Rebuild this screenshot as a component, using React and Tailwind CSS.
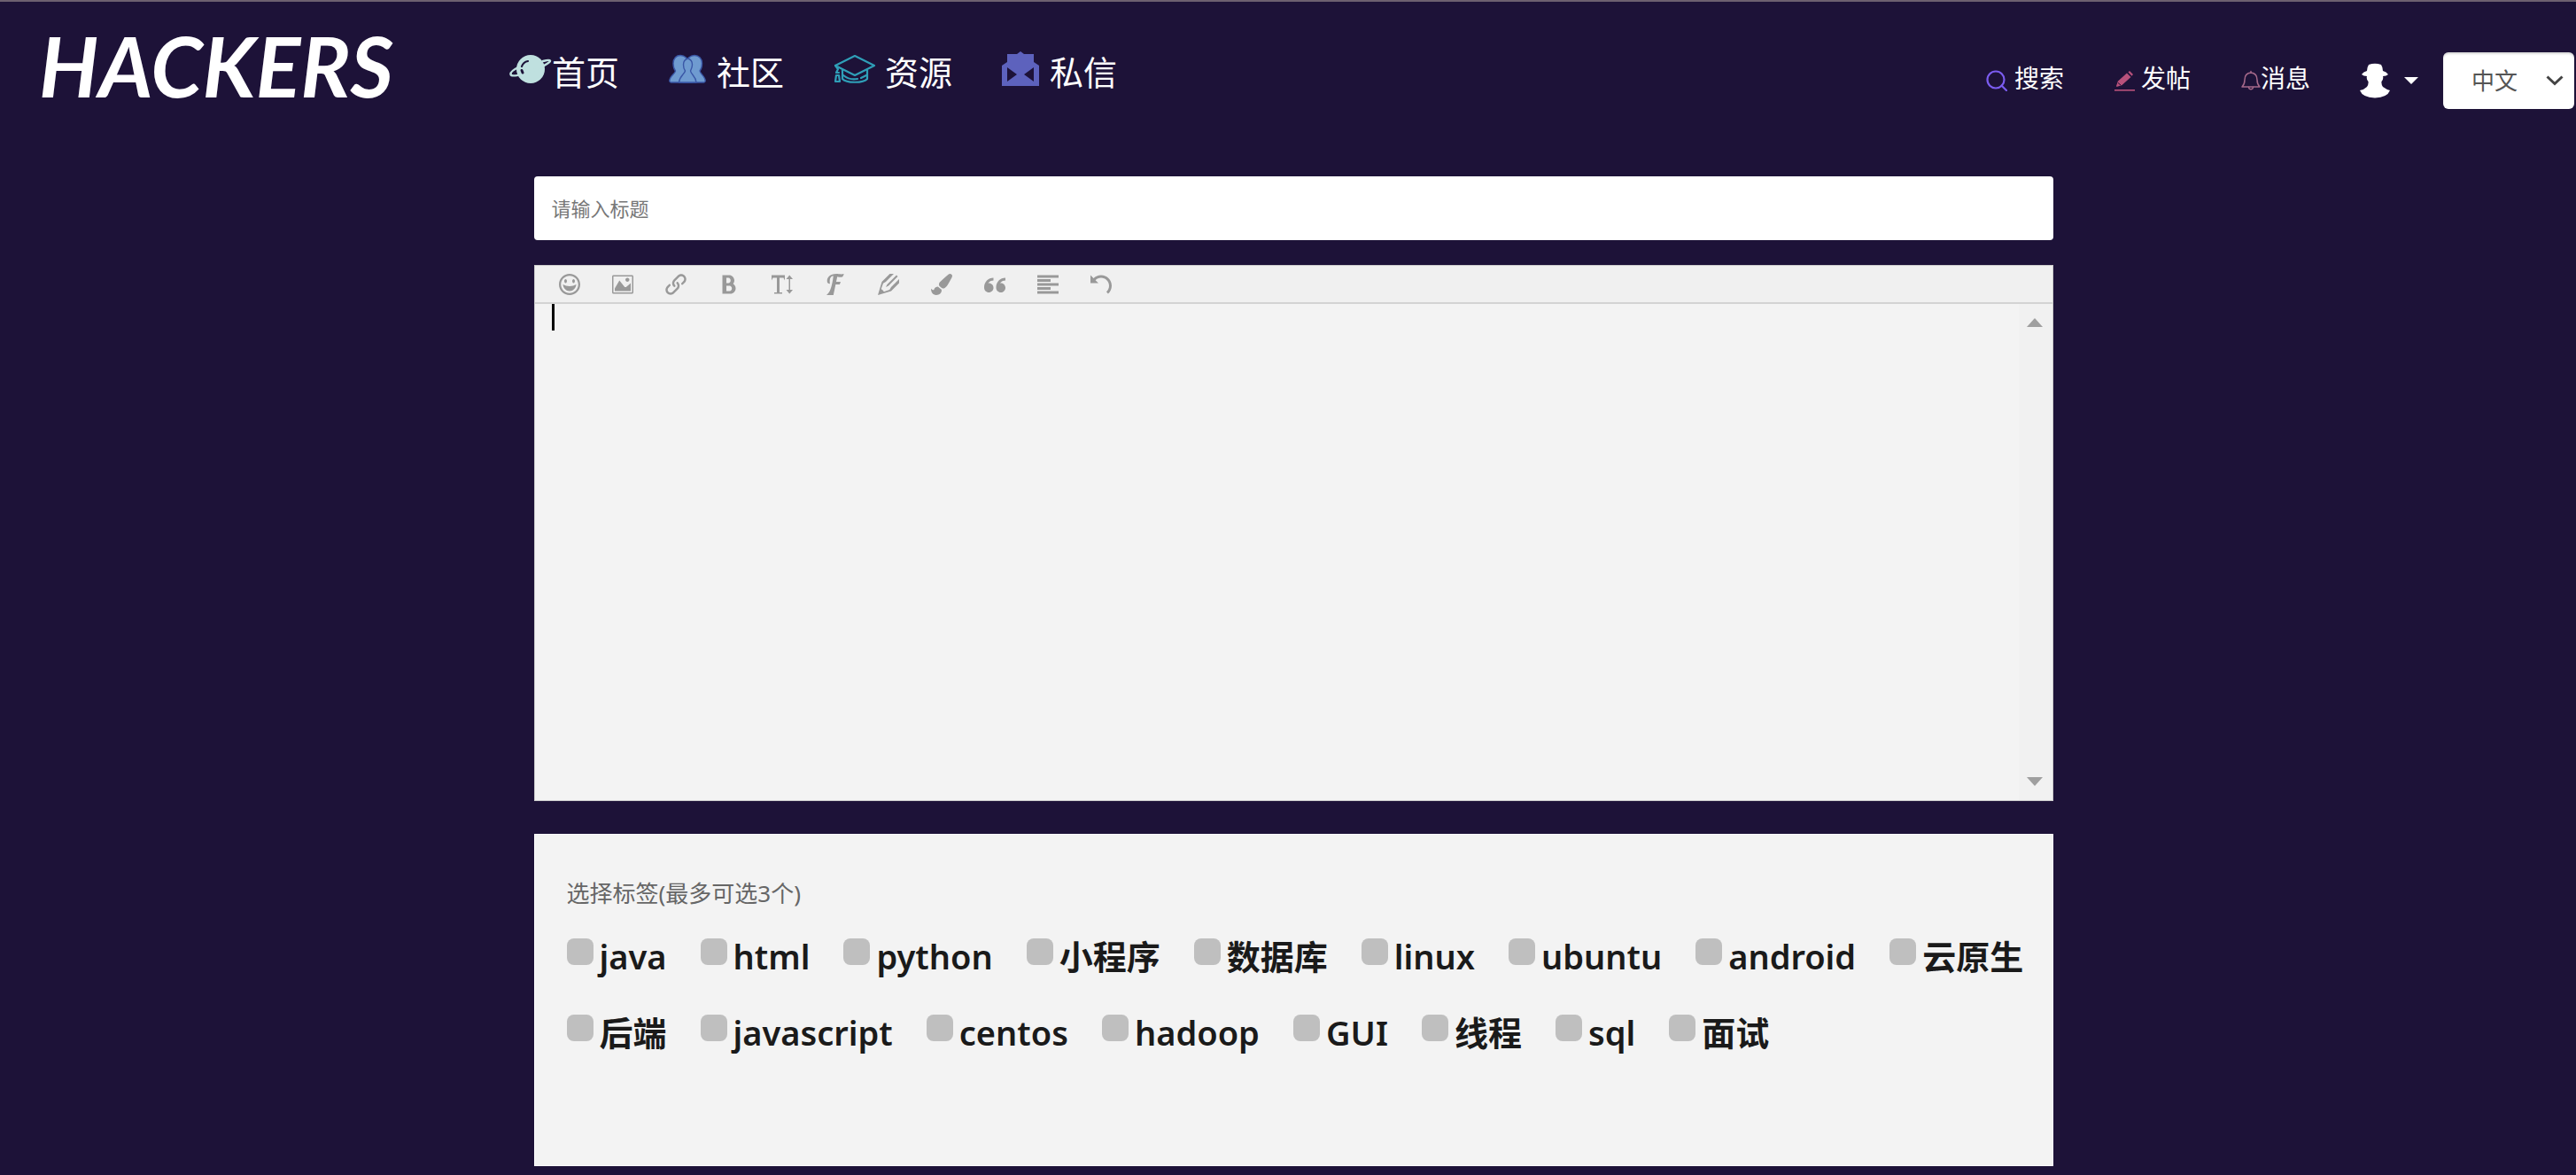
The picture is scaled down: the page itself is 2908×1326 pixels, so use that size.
import React, { useState } from "react";
import {
  ImHappy,
  ImImage,
  ImLink,
  ImBold,
  ImTextHeight,
  ImFont,
  ImPencil2,
  ImQuotesLeft,
  ImParagraphLeft,
  ImUndo,
} from "react-icons/im";
import { FaPaintBrush } from "react-icons/fa";

function PlanetIcon() {
  return (
    <svg viewBox="0 0 48 34" className="h-[34px] w-12" aria-hidden="true">
      <circle cx="24" cy="17" r="16" fill="#bfe0df" />
      <path
        d="M10 15C4 18 1 21 1.500 23C2.500 26 12 24 24 19.500C37 14.500 47 9.500 46 7.500C45.500 6.500 42 7 38 8"
        fill="none"
        stroke="#bfe0df"
        strokeWidth="2.400"
        strokeLinecap="round"
      />
      <path d="M14 14C15 11 18 8.500 21 8" fill="none" stroke="#1d1238" strokeWidth="2.200" strokeLinecap="round" />
      <path d="M14 18.500L15 21" fill="none" stroke="#1d1238" strokeWidth="3" strokeLinecap="round" />
    </svg>
  );
}

function PeopleIcon() {
  return (
    <svg viewBox="0 0 42 34" className="h-[34px] w-[42px]" aria-hidden="true">
      <g fill="#6f9bd0" stroke="#3a57a6" strokeWidth="1.400" strokeLinejoin="round">
        <path d="M13 1.500C18 1.500 22 5 22 10.500C22 14 21 16.500 19.500 18.500C19.500 23 25 24 26.500 32H2.500C.5 32 .5 29.500 1.500 27.500C3 24 7 22 7.500 19C5.500 16.500 5 13.500 5 10.500C5 5 8.500 1.500 13 1.500Z" />
        <path d="M29 1.500C34 1.500 37.500 5 37.500 10.500C37.500 13.500 37 16.500 35 19C35.500 22 39 24 40.500 27.500C41.500 29.500 41.500 32 39.500 32H16C17 24 22.500 23 22.500 18.500C21 16.500 20 14 20 10.500C20 5 24 1.500 29 1.500Z" />
        <path d="M21.500 5C25 6 26.500 9 26.500 12C26.500 15 25.500 17 24.500 19C25 23 30.500 25 31 32H11.500C12 25 17.500 23 18.500 19C17 17 16.500 15 16.500 12C16.500 9 18 6 21.500 5Z" />
      </g>
    </svg>
  );
}

function CapIcon() {
  return (
    <svg
      viewBox="0 0 48 34"
      className="h-[34px] w-12"
      fill="none"
      stroke="#2f9fb8"
      strokeWidth="2.200"
      strokeLinejoin="round"
      strokeLinecap="round"
      aria-hidden="true"
    >
      <path d="M24 2L46 13L24 24L2 13Z" />
      <path d="M10 18V28C14 33 34 33 38 28V18" />
      <path d="M11 24C16 28 22 29 27 28M31 27L37 24" />
      <path d="M2 13L5 17L3 21H6M3 24L2 31H7L6 24Z" />
    </svg>
  );
}

function MailIcon() {
  return (
    <svg viewBox="0 0 42 40" className="h-10 w-[42px]" aria-hidden="true">
      <path
        d="M17 3L21 0L25 3H36V12L42 16V39H0V16L6 12V3ZM6 18V34L17 26ZM36 18L25 26L36 34Z"
        fill="#5d62bd"
        fillRule="evenodd"
      />
    </svg>
  );
}

function SearchIcon() {
  return (
    <svg viewBox="0 0 24 24" className="size-6" fill="none" stroke="#7b5cf0" strokeWidth="2.200" strokeLinecap="round" aria-hidden="true">
      <circle cx="11" cy="11" r="9.500" />
      <path d="M17.500 17.500L23 23" />
    </svg>
  );
}

function PenIcon() {
  return (
    <svg viewBox="0 0 24 24" className="size-6" fill="#b8517b" aria-hidden="true">
      <path d="M2 18L4 12.500L14 3.500L18.500 8L8.500 17L2.500 19Z" />
      <path d="M15.500 2.500L17 1L21 5L19.500 6.800Z" />
      <path d="M4 14.500L7 17" stroke="#1d1238" strokeWidth="1" />
      <rect x="0" y="22" width="23" height="1.600" />
    </svg>
  );
}

function BellIcon() {
  return (
    <svg viewBox="0 0 22 24" className="h-6 w-[22px]" fill="none" stroke="#a5688a" strokeWidth="1.500" strokeLinecap="round" strokeLinejoin="round" aria-hidden="true">
      <path d="M11 1.500V3M11 3C6 3.500 4 7 4 11C4 15 3 17 1 19H21C19 17 18 15 18 11C18 7 16 3.500 11 3Z" />
      <path d="M8.500 19.500C9 22.500 13 22.500 13.500 19.500" />
    </svg>
  );
}

function ProfileIcon() {
  return (
    <svg viewBox="0 0 34 40" className="h-10 w-[34px]" fill="#ffffff" aria-hidden="true">
      <path d="M10 2Q17-.5 24 2Q26 5 26 9Q30 10 32 13Q30 15 26 15Q27 18 24.500 21Q24 24 26 27Q30 30 34 31Q31 39 17 39.500Q3 39 0 31Q5 30 8 27Q10 24 9.500 21Q7 18 8 15Q4 15 2 13Q4 10 8 9Q8 5 10 2Z" />
    </svg>
  );
}

const navLinks = [
  { label: "首页", Icon: PlanetIcon, gap: "gap-0" },
  { label: "社区", Icon: PeopleIcon, gap: "gap-3" },
  { label: "资源", Icon: CapIcon, gap: "gap-2.5" },
  { label: "私信", Icon: MailIcon, gap: "gap-3" },
];

const actions = [
  { label: "搜索", Icon: SearchIcon, gap: "gap-2" },
  { label: "发帖", Icon: PenIcon, gap: "gap-1.5" },
  { label: "消息", Icon: BellIcon, gap: "gap-0" },
];

const tools = [
  { label: "表情", Icon: ImHappy },
  { label: "图片", Icon: ImImage },
  { label: "链接", Icon: ImLink },
  { label: "粗体", Icon: ImBold },
  { label: "字号", Icon: ImTextHeight },
  { label: "字体", Icon: ImFont },
  { label: "文字颜色", Icon: ImPencil2 },
  { label: "背景颜色", Icon: FaPaintBrush },
  { label: "引用", Icon: ImQuotesLeft },
  { label: "对齐", Icon: ImParagraphLeft },
  { label: "撤销", Icon: ImUndo },
];

const tags = [
  "java", "html", "python", "小程序", "数据库", "linux", "ubuntu", "android", "云原生",
  "后端", "javascript", "centos", "hadoop", "GUI", "线程", "sql", "面试",
];

function Header() {
  return (
    <header className="flex items-start justify-between border-t-2 border-[#6d6070] pr-0.5 text-white">
      <div className="flex items-center">
        <a
          href="#home"
          className="ml-11 mt-4 w-[531px] font-['Lato','Liberation_Sans',sans-serif] text-[94px] leading-[112px] font-bold italic"
        >
          HACKERS
        </a>
        <nav className="mt-[30px] flex items-center gap-14">
          {navLinks.map(({ label, Icon, gap }) => (
            <a key={label} href="#nav" className={`flex items-center text-[38px] leading-[52px] ${gap}`}>
              <span className="mb-1.5">
                <Icon />
              </span>
              {label}
            </a>
          ))}
        </nav>
      </div>
      <div className="mt-14 flex h-[66px] items-center">
        <div className="flex items-center gap-[57px]">
          {actions.map(({ label, Icon, gap }) => (
            <a key={label} href="#action" className={`flex items-center text-[28px] leading-10 ${gap}`}>
              <Icon />
              <span className="mb-1.5">{label}</span>
            </a>
          ))}
        </div>
        <button type="button" aria-label="个人中心" className="ml-14 flex items-center gap-4">
          <ProfileIcon />
          <svg viewBox="0 0 16 8" className="h-2 w-4" fill="#ffffff" aria-hidden="true">
            <path d="M0 0H16L8 8Z" />
          </svg>
        </button>
        <div className="relative ml-7">
          <select
            aria-label="语言"
            className="h-16 w-[148px] appearance-none rounded-md bg-white pl-8 text-[26px] text-[#555555] shadow-[inset_0_2px_2px_rgba(0,0,0,0.15)]"
          >
            <option>中文</option>
            <option>English</option>
          </select>
          <svg
            viewBox="0 0 20 12"
            className="pointer-events-none absolute right-3 top-[26px] h-3 w-5"
            fill="none"
            stroke="#444444"
            strokeWidth="3"
            aria-hidden="true"
          >
            <path d="M1.500 1.500L10 9.500L18.500 1.500" />
          </svg>
        </div>
      </div>
    </header>
  );
}

function Editor() {
  return (
    <section className="border border-[#cccccc] bg-[#f3f3f3]">
      <div className="flex h-[43px] items-center border-b-2 border-[#d3d3d3] bg-[#f0f0f0] px-[9px]">
        {tools.map(({ label, Icon }) => (
          <button key={label} type="button" aria-label={label} className="flex w-[60px] justify-center text-[#999999]">
            <Icon className="size-6" />
          </button>
        ))}
      </div>
      <div className="relative flex h-[560px]">
        <textarea aria-label="正文" className="flex-1 resize-none bg-transparent px-5 py-1 text-[26px] outline-none" />
        <span className="absolute left-[19px] top-0 h-[30px] w-[3px] bg-black" />
        <div className="flex w-[38px] flex-col items-center justify-between bg-[#f1f1f1] py-4 pr-0.5">
          <button type="button" aria-label="向上滚动">
            <svg viewBox="0 0 18 10" className="block h-2.5 w-[18px]" fill="#9f9f9f">
              <path d="M0 10L9 0L18 10Z" />
            </svg>
          </button>
          <button type="button" aria-label="向下滚动">
            <svg viewBox="0 0 18 10" className="block h-2.5 w-[18px]" fill="#9f9f9f">
              <path d="M0 0H18L9 10Z" />
            </svg>
          </button>
        </div>
      </div>
    </section>
  );
}

function TagPicker() {
  const [picked, setPicked] = useState([]);
  const toggle = (tag) =>
    setPicked((list) =>
      list.includes(tag) ? list.filter((t) => t !== tag) : list.length < 3 ? [...list, tag] : list
    );
  return (
    <fieldset className="mt-[37px] min-h-[375px] border border-white bg-[#f3f3f3] pt-[46px] pr-6 pb-8 pl-9">
      <p className="text-[26px] leading-10 text-[#666666]">选择标签(最多可选3个)</p>
      <div className="mt-6 flex flex-wrap gap-x-[38px] gap-y-[34px]">
        {tags.map((tag) => (
          <label key={tag} className="flex h-[52px] items-start gap-[7px]">
            <input
              type="checkbox"
              checked={picked.includes(tag)}
              onChange={() => toggle(tag)}
              className="mt-[7px] size-[30px] appearance-none rounded-lg bg-[#bfbfbf] checked:bg-[#5d62bd]"
            />
            <span className="text-[38px] leading-[54px] font-semibold text-[#1a1a1a]">{tag}</span>
          </label>
        ))}
      </div>
    </fieldset>
  );
}

export default function App() {
  return (
    <div className="min-h-screen bg-[#1d1238] pb-2.5 font-['Noto_Sans','Noto_Sans_CJK_SC',sans-serif]">
      <Header />
      <main className="pl-3 pt-[69px]">
        <div className="mx-auto w-full max-w-[1715px]">
          <input
            type="text"
            aria-label="标题"
            placeholder="请输入标题"
            className="block h-[72px] w-full rounded bg-white px-5 text-[22px] text-[#333333] outline-none placeholder:text-[#777777]"
          />
          <div className="h-7" />
          <Editor />
          <TagPicker />
        </div>
      </main>
    </div>
  );
}
